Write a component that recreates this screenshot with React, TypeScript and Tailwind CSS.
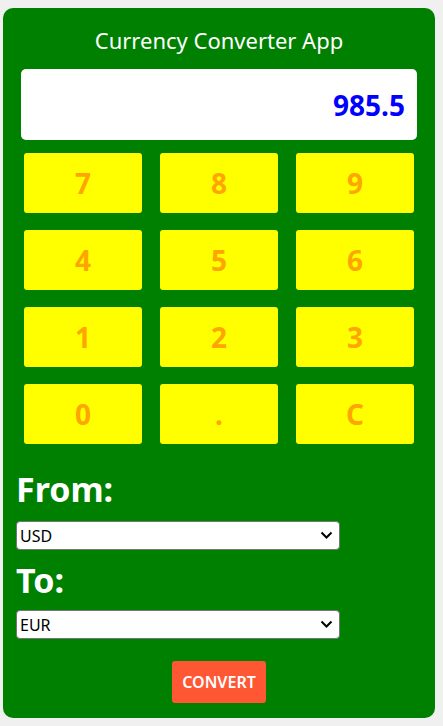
import React from "react";

const keys = ["7", "8", "9", "4", "5", "6", "1", "2", "3", "0", ".", "C"];

export default function App() {
  return (
    <div className="min-h-[726px] bg-[#f0f0f0] pt-[8px] pl-[3px] pr-[8px]" style={{ fontFamily: '"Noto Sans", "Open Sans", sans-serif' }}>
      <div className="w-[432px] h-[710px] bg-[#008000] rounded-[10px] px-[13px] pt-[17px] flex flex-col">
        <h1 className="text-white text-[22px] leading-[30px] text-center">Currency Converter App</h1>
        <div className="mt-[14px] mx-[5px] h-[71px] bg-white rounded-[5px] flex items-center justify-end pr-[12px]">
          <span className="text-[#0000ff] font-bold text-[28px]">985.5</span>
        </div>
        <div className="mt-[13px] mx-[8px] grid grid-cols-3 gap-x-[18px] gap-y-[17px]">
          {keys.map((k) => (
            <button key={k} className="h-[60px] bg-[#ffff00] rounded-[3px] text-[#ffa500] font-bold text-[28px] flex items-center justify-center">
              {k}
            </button>
          ))}
        </div>
        <h2 className="mt-[25px] text-white font-bold text-[34px] leading-[40px]">From:</h2>
        <div className="mt-[12px] w-[324px] h-[29px] bg-white border border-[#767676] rounded-[4px] flex items-center justify-between pl-[3px] pr-[6px]">
          <span className="text-black text-[16px]">USD</span>
          <svg width="13" height="9" viewBox="0 0 13 9"><path d="M1.5 1.5 L6.5 6.5 L11.5 1.5" fill="none" stroke="black" strokeWidth="2" /></svg>
        </div>
        <h2 className="mt-[10px] text-white font-bold text-[34px] leading-[40px]">To:</h2>
        <div className="mt-[10px] w-[324px] h-[29px] bg-white border border-[#767676] rounded-[4px] flex items-center justify-between pl-[3px] pr-[6px]">
          <span className="text-black text-[16px]">EUR</span>
          <svg width="13" height="9" viewBox="0 0 13 9"><path d="M1.5 1.5 L6.5 6.5 L11.5 1.5" fill="none" stroke="black" strokeWidth="2" /></svg>
        </div>
        <div className="mt-[22px] flex justify-center">
          <button className="w-[94px] h-[42px] bg-[#ff5733] rounded-[3px] text-white font-semibold text-[16px]">CONVERT</button>
        </div>
      </div>
    </div>
  );
}
